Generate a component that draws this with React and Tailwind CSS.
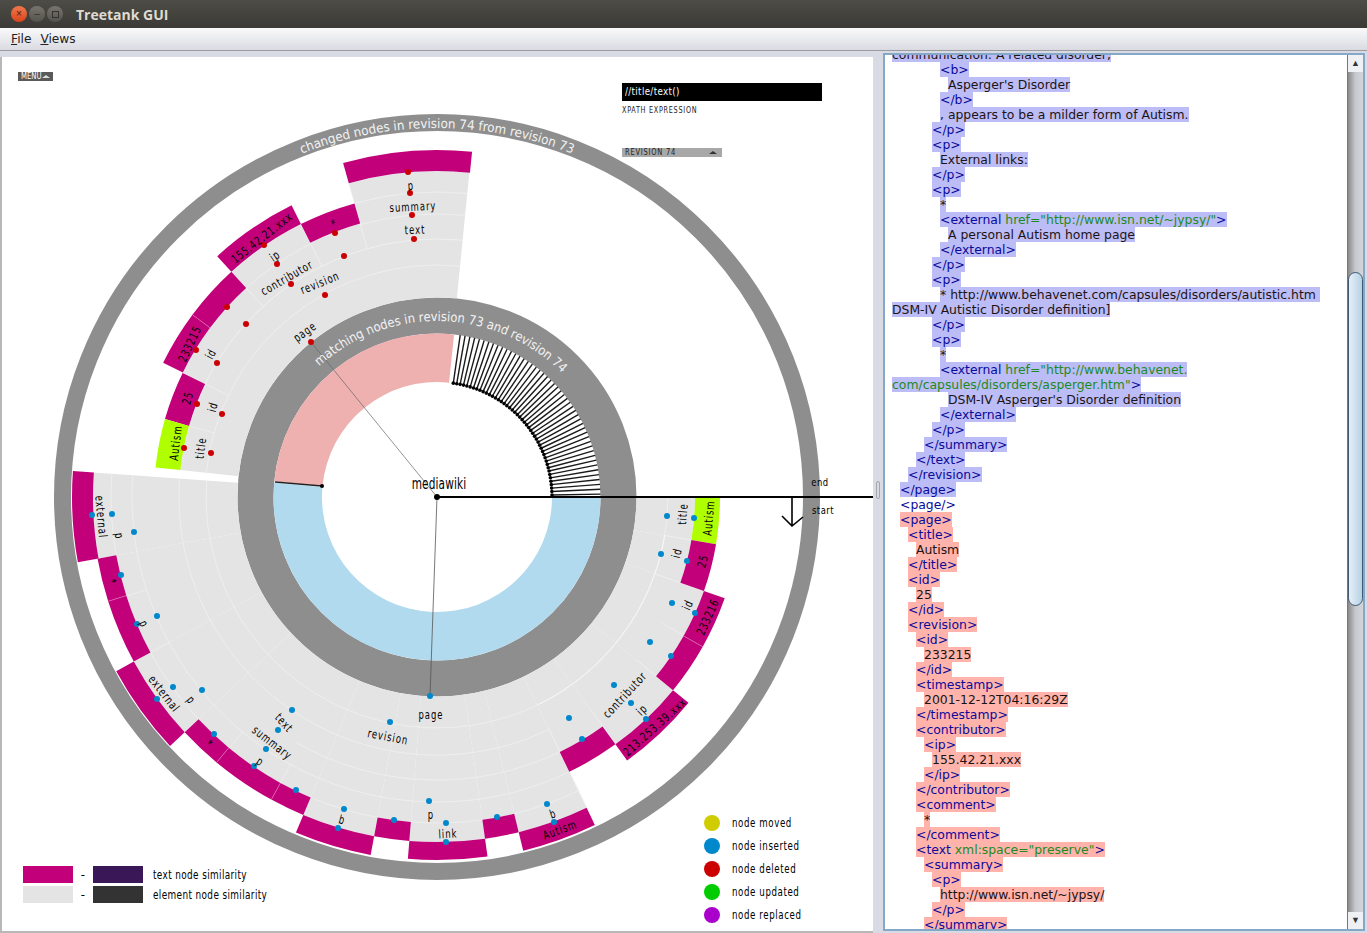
const CX = 437;
const CY = 497;
const MAGENTA = "#c2007a";
const LIME = "#b0ff00";
const GRAY = "#e4e4e4";
const RING = "#8e8e8e";
const LABEL_FONT = '"DejaVu Sans Condensed", "DejaVu Sans", sans-serif';

const pt = (r, a) => {
  const t = (a * Math.PI) / 180;
  return [CX + r * Math.cos(t), CY + r * Math.sin(t)];
};

// annular sector between radii r1..r2, angles a1..a2 in degrees clockwise from 3 o'clock
const sector = (r1, r2, a1, a2) => {
  const [x1, y1] = pt(r2, a1);
  const [x2, y2] = pt(r2, a2);
  const [x3, y3] = pt(r1, a2);
  const [x4, y4] = pt(r1, a1);
  const large = a2 - a1 > 180 ? 1 : 0;
  return `M${x1} ${y1}A${r2} ${r2} 0 ${large} 1 ${x2} ${y2}L${x3} ${y3}A${r1} ${r1} 0 ${large} 0 ${x4} ${y4}Z`;
};

const arc = (r, a1, a2) => {
  const [x1, y1] = pt(r, a1);
  const [x2, y2] = pt(r, a2);
  return `M${x1} ${y1}A${r} ${r} 0 ${a2 - a1 > 180 ? 1 : 0} 1 ${x2} ${y2}`;
};

// gray part of the lower half: [from, to, outer radius]
const lowerGray = [
  [0, 9.6, 258], [9.6, 19.4, 258], [19.4, 39.3, 283], [39.3, 54.2, 305], [54.2, 64.3, 283],
  [64.3, 76.3, 345], [76.3, 82, 326], [82, 94.6, 345], [94.6, 100.5, 326], [100.5, 112.8, 345],
  [112.8, 137, 326], [137, 151.5, 345], [151.5, 169.7, 326], [169.7, 184.1, 344],
];

const upperGray = [
  [-174, -154, 258], [-154, -132.4, 283], [-132.4, -116.5, 305], [-116.5, -105.7, 284], [-105.7, -84.3, 326],
];

// leaf segments: [inner r, outer r, from, to, colour]
const leaves = [
  [326, 347, -105.7, -84.2, MAGENTA], [284, 305, -116.5, -105.7, MAGENTA], [305, 326, -132.4, -116.5, MAGENTA],
  [283, 305, -143.3, -132.4, MAGENTA], [283, 305, -153.9, -143.3, MAGENTA], [258, 283, -164, -154, MAGENTA],
  [258, 283, -174, -164, LIME],
  [258, 283, 0, 9.6, LIME], [258, 283, 9.6, 19.4, MAGENTA], [283, 305, 19.4, 29.4, MAGENTA],
  [283, 305, 29.4, 39.3, MAGENTA], [305, 325, 39.3, 54.2, MAGENTA], [283, 305, 54.2, 64.3, MAGENTA],
  [345, 364, 64.3, 76.3, MAGENTA], [326, 345, 76.3, 82, MAGENTA], [345, 363, 82, 94.6, MAGENTA],
  [326, 345, 94.6, 100.5, MAGENTA], [345, 364, 100.5, 112.8, MAGENTA], [326, 345, 112.8, 118.7, MAGENTA],
  [326, 345, 118.7, 129.7, MAGENTA], [326, 345, 129.7, 137, MAGENTA], [345, 365, 137, 151.5, MAGENTA],
  [326, 345, 151.5, 162.4, MAGENTA], [326, 345, 162.4, 169.7, MAGENTA], [344, 365, 169.7, 184.1, MAGENTA],
];

// thin pale lines between the nodes
const rings = [
  [232, -174, -84.3], [258, -174, -84.3], [283, -105.7, -84.3], [305, -105.7, -84.3], [305, -132.4, -116.5],
  [283, -132.4, -116.5],
  [231, 0, 184], [258, 64, 184], [283, 64.3, 120], [305, 64.3, 184],
  [326, 64.3, 76.3], [326, 82, 94.6], [326, 100.5, 112.8], [326, 137, 151.5], [326, 169.7, 184.1],
];
const spokes = [
  [-164, 232, 258], [-154, 232, 283], [-143.3, 283, 305], [-132.4, 258, 305], [-116.5, 258, 305], [-105.7, 258, 326],
  [9.6, 231, 258], [19.4, 229, 283], [29.3, 258, 305], [39.2, 258, 305], [54.1, 261, 305], [64.2, 258, 345],
  [162.3, 305, 345], [151.5, 304, 345], [129.6, 305, 345], [118.7, 305, 345],
];

const redDots = [
  [408, 172], [410, 193], [412, 215], [414, 239], [335, 233], [344, 256], [264, 245], [277, 264], [291, 284], [325, 295],
  [227, 307], [246, 324], [196, 350], [217, 363], [197, 404], [222, 414], [184, 448], [211, 453], [311, 342],
];
const blueDots = [
  [92, 515], [112, 514], [134, 532], [121, 575], [137, 624], [157, 616], [173, 687], [202, 690], [157, 699], [214, 734],
  [254, 766], [266, 749], [278, 730], [292, 710], [296, 790], [344, 809], [338, 828], [394, 820], [429, 801], [446, 823],
  [446, 842], [390, 722], [430, 696], [667, 516], [694, 518], [661, 554], [687, 561], [672, 603], [695, 613], [650, 642],
  [671, 656], [614, 685], [631, 703], [646, 719], [569, 718], [582, 739], [547, 804], [554, 822], [497, 817],
];

// [text, x, y, rotation]
const labels = [
  ["p", 411, 186, -4], ["summary", 413, 207, -3], ["text", 415, 230, -2], ["*", 334, 224, -20],
  ["155.42.21.xxx", 262, 238, -38], ["ip", 275, 256, -34], ["contributor", 287, 278, -30], ["revision", 320, 283, -22],
  ["page", 305, 332, -36], ["233215", 190, 344, -65], ["id", 211, 354, -62], ["25", 188, 398, -75],
  ["id", 213, 407, -74], ["Autism", 176, 443, -83], ["title", 201, 448, -83],
  ["title", 683, 514, -85], ["Autism", 709, 518, -85], ["id", 677, 553, -76], ["25", 703, 561, -75],
  ["id", 688, 605, -66], ["233216", 708, 617, -66], ["contributor", 625, 695, -47], ["ip", 642, 710, -44],
  ["213.253.39.xxx", 655, 727, -42], ["page", 431, 715, 0], ["revision", 388, 737, 11], ["text", 284, 723, 48],
  ["summary", 272, 743, 38], ["p", 260, 762, 35], ["external", 164, 694, 52], ["p", 191, 700, 52],
  ["p", 144, 624, 65], ["*", 112, 582, 72], ["external", 101, 517, 85], ["p", 119, 536, 82], ["*", 209, 744, 45],
  ["b", 342, 820, 15], ["p", 431, 815, 0], ["link", 448, 834, -3], ["b", 553, 814, -18], ["Autism", 560, 830, -20],
];

const stripes = [];
for (let a = -1; a >= -83.5; a -= 1.72) stripes.push(a);

function Chart() {
  return (
    <svg width="871" height="874" viewBox="2 57 871 874" className="block">
      <defs>
        <path id="outerCurve" d={arc(369, -150, -30)} />
        <path id="innerCurve" d={arc(176, -170, -10)} />
      </defs>

      {/* outer and inner grey rings */}
      <circle cx={CX} cy={CY} r={374.5} fill="none" stroke={RING} strokeWidth={17} />
      <circle cx={CX} cy={CY} r={181.5} fill="none" stroke={RING} strokeWidth={36} />

      {/* grey sectors */}
      <path d={sector(199.5, 258, -174, -84.3)} fill={GRAY} />
      {upperGray.map(([a1, a2, r]) => (
        <path key={a1} d={sector(258, r, a1, a2)} fill={GRAY} />
      ))}
      {lowerGray.map(([a1, a2, r]) => (
        <path key={a1} d={sector(199.5, r, a1, a2)} fill={GRAY} />
      ))}
      {rings.map(([r, a1, a2], i) => (
        <path key={i} d={arc(r, a1, a2)} fill="none" stroke="#f2f2f2" strokeWidth={0.7} />
      ))}
      {spokes.map(([a, r1, r2], i) => {
        const [x1, y1] = pt(r1, a);
        const [x2, y2] = pt(r2, a);
        return <line key={i} x1={x1} y1={y1} x2={x2} y2={y2} stroke="#f0f0f0" strokeWidth={0.7} />;
      })}
      <path d={arc(231, 9.6, 64)} fill="none" stroke="#f8f8f8" strokeWidth={1} />

      {leaves.map(([r1, r2, a1, a2, color], i) => (
        <path key={i} d={sector(r1, r2, a1, a2)} fill={color} />
      ))}
      {[[-143.3, 283, 305], [162.4, 326, 345], [129.7, 326, 345], [118.7, 326, 345], [29.4, 283, 305]].map(([a, r1, r2], i) => {
        const [x1, y1] = pt(r1, a);
        const [x2, y2] = pt(r2, a);
        return <line key={i} x1={x1} y1={y1} x2={x2} y2={y2} stroke="#d96aae" strokeWidth={0.8} />;
      })}

      {/* middle ring: matches in pink and blue, changes as black stripes */}
      <path d={sector(115, 163.5, -174.5, -84)} fill="#efb0b0" />
      <path d={sector(115, 163.5, 0, 185)} fill="#b2daef" />
      {stripes.map((a) => {
        const [x1, y1] = pt(115, a);
        const [x2, y2] = pt(163.5, a);
        return (
          <g key={a}>
            <line x1={x1} y1={y1} x2={x2} y2={y2} stroke="#1a1a1a" strokeWidth={1.4} />
            <circle cx={x1} cy={y1} r={1.8} fill="#000" />
          </g>
        );
      })}
      <line x1={275} y1={482} x2={322} y2={486} stroke="#222" strokeWidth={1.6} />
      <circle cx={322} cy={486} r={2} fill="#000" />

      {/* hierarchy links */}
      <line x1={CX} y1={CY} x2={311} y2={342} stroke="#666" strokeWidth={0.7} />
      <line x1={CX} y1={CY} x2={430} y2={696} stroke="#555" strokeWidth={0.8} />
      <line x1={CX} y1={CY} x2={873} y2={CY} stroke="#000" strokeWidth={2} />
      <circle cx={CX} cy={CY} r={3} fill="#000" />

      {/* revision arrow */}
      <path d="M792 497V526M782 516L792 526L803 517" fill="none" stroke="#000" strokeWidth={1.6} />

      {redDots.map(([x, y]) => (
        <circle key={`${x}-${y}`} cx={x} cy={y} r={3} fill="#cc0000" />
      ))}
      {blueDots.map(([x, y]) => (
        <circle key={`${x}-${y}`} cx={x} cy={y} r={3} fill="#0088cc" />
      ))}

      {/* the labels are a narrow font in the picture, so squeeze them horizontally */}
      <g fontFamily={LABEL_FONT} fontSize={12} letterSpacing={1.3} fill="#000" textAnchor="middle" dominantBaseline="central">
        {labels.map(([t, x, y, rot], i) => (
          <text key={i} transform={`translate(${x} ${y}) rotate(${rot}) scale(0.78 1)`}>
            {t}
          </text>
        ))}
        <text transform="translate(439 484) scale(0.78 1)" fontSize={15} letterSpacing={0.2}>mediawiki</text>
        <text transform="translate(820 482) scale(0.85 1)" fontSize={11} letterSpacing={0.6}>end</text>
        <text transform="translate(823 510) scale(0.85 1)" fontSize={11} letterSpacing={0.6}>start</text>
      </g>

      <g fontFamily={LABEL_FONT} fontSize={13} fill="#f2f2f2" textAnchor="middle">
        <text>
          <textPath href="#outerCurve" startOffset="50%" textLength={277} lengthAdjust="spacingAndGlyphs">changed nodes in revision 74 from revision 73</textPath>
        </text>
        <text>
          <textPath href="#innerCurve" startOffset="51%" textLength={268} lengthAdjust="spacingAndGlyphs">matching nodes in revision 73 and revision 74</textPath>
        </text>
      </g>
    </svg>
  );
}

const nodeKinds = [
  ["node moved", "bg-[#cfcc00]"],
  ["node inserted", "bg-[#0088cc]"],
  ["node deleted", "bg-[#cc0000]"],
  ["node updated", "bg-[#00cc00]"],
  ["node replaced", "bg-[#aa00cc]"],
];

const labelFont = "font-['DejaVu_Sans_Condensed','DejaVu_Sans',sans-serif]";

function CanvasPane() {
  return (
    <div className="relative w-[873px] border-l-2 border-b-2 border-[#b8b8b8] bg-white overflow-hidden">
      <Chart />

      <div className={`absolute left-[16px] top-[15px] flex h-[9px] w-[35px] items-center bg-[#5a5a5a] pl-[3px] text-[9px] leading-none text-white ${labelFont}`}>
        <span className="w-[21px] origin-left scale-x-[0.85]">MENU</span>
        <span className="h-0 w-0 border-x-[4px] border-b-[3px] border-x-transparent border-b-[#dddddd]" />
      </div>

      <div className={`absolute left-[620px] top-[26px] w-[200px] ${labelFont}`}>
        <div className="flex h-[18px] items-center bg-black pl-[3px] text-[11px] tracking-[0.4px] text-white">
          <span className="origin-left scale-x-[0.88]">//title/text()</span>
        </div>
        <div className="mt-[2px] h-[14px] origin-left scale-x-[0.8] text-[9px] leading-[14px] tracking-[0.9px] text-[#222]">XPATH EXPRESSION</div>
        <div className="mt-[31px] flex h-[9px] w-[100px] items-center justify-between bg-[#a8a8a8] pl-[3px] pr-[5px] text-[9px] leading-none tracking-[0.9px] text-[#222]">
          <span className="origin-left scale-x-[0.83]">REVISION 74</span>
          <span className="h-0 w-0 border-x-[4px] border-b-[3px] border-x-transparent border-b-[#333333]" />
        </div>
      </div>

      <div className={`absolute left-[21px] top-[809px] flex flex-col gap-[3px] text-[13px] tracking-[0.5px] text-black ${labelFont}`}>
        <div className="flex h-[17px] items-center">
          <span className="h-[17px] w-[50px] bg-[#c2007a]" />
          <span className="w-[20px] text-center">-</span>
          <span className="h-[17px] w-[50px] bg-[#3a1858]" />
          <span className="ml-[10px] origin-left scale-x-[0.76] whitespace-nowrap">text node similarity</span>
        </div>
        <div className="flex h-[17px] items-center">
          <span className="h-[17px] w-[50px] bg-[#e4e4e4]" />
          <span className="w-[20px] text-center">-</span>
          <span className="h-[17px] w-[50px] bg-[#333333]" />
          <span className="ml-[10px] origin-left scale-x-[0.76] whitespace-nowrap">element node similarity</span>
        </div>
      </div>

      <div className={`absolute left-[702px] top-[758px] flex flex-col gap-[7px] text-[13px] tracking-[0.8px] text-black ${labelFont}`}>
        {nodeKinds.map(([label, color]) => (
          <div key={label} className="flex h-[16px] items-center gap-[12px]">
            <span className={`h-[16px] w-[16px] rounded-full ${color}`} />
            <span className="origin-left scale-x-[0.74] whitespace-nowrap">{label}</span>
          </div>
        ))}
      </div>
    </div>
  );
}

const A = (s) => ({ attr: s });

// [indent, highlight, content]; content is a string or a list of tag/attribute pieces
const rows = [
  [0, "b", "communication: A related disorder,"],
  [48, "b", "<b>"],
  [56, "b", "Asperger's Disorder"],
  [48, "b", "</b>"],
  [48, "b", ", appears to be a milder form of Autism."],
  [40, "b", "</p>"],
  [40, "b", "<p>"],
  [48, "b", "External links:"],
  [40, "b", "</p>"],
  [40, "b", "<p>"],
  [48, "b", "*"],
  [48, "b", ["<external ", A('href="http://www.isn.net/~jypsy/"'), ">"]],
  [56, "b", "A personal Autism home page"],
  [48, "b", "</external>"],
  [40, "b", "</p>"],
  [40, "b", "<p>"],
  [48, "b", "* http://www.behavenet.com/capsules/disorders/autistic.htm "],
  [0, "b", "DSM-IV Autistic Disorder definition]"],
  [40, "b", "</p>"],
  [40, "b", "<p>"],
  [48, "b", "*"],
  [48, "b", ["<external ", A('href="http://www.behavenet.')]],
  [0, "b", [A('com/capsules/disorders/asperger.htm"'), ">"]],
  [56, "b", "DSM-IV Asperger's Disorder definition"],
  [48, "b", "</external>"],
  [40, "b", "</p>"],
  [32, "b", "</summary>"],
  [24, "b", "</text>"],
  [16, "b", "</revision>"],
  [8, "b", "</page>"],
  [8, "", "<page/>"],
  [8, "r", "<page>"],
  [16, "r", "<title>"],
  [24, "r", "Autism"],
  [16, "r", "</title>"],
  [16, "r", "<id>"],
  [24, "r", "25"],
  [16, "r", "</id>"],
  [16, "r", "<revision>"],
  [24, "r", "<id>"],
  [32, "r", "233215"],
  [24, "r", "</id>"],
  [24, "r", "<timestamp>"],
  [32, "r", "2001-12-12T04:16:29Z"],
  [24, "r", "</timestamp>"],
  [24, "r", "<contributor>"],
  [32, "r", "<ip>"],
  [40, "r", "155.42.21.xxx"],
  [32, "r", "</ip>"],
  [24, "r", "</contributor>"],
  [24, "r", "<comment>"],
  [32, "r", "*"],
  [24, "r", "</comment>"],
  [24, "r", ["<text ", A('xml:space="preserve"'), ">"]],
  [32, "r", "<summary>"],
  [40, "r", "<p>"],
  [48, "r", "http://www.isn.net/~jypsy/"],
  [40, "r", "</p>"],
  [32, "r", "</summary>"],
];

const highlight = { b: "bg-[#bcbcf6]", r: "bg-[#ffb3ab]", "": "" };

function Piece({ part }) {
  if (part.attr) return <span className="text-[#1d8a1d]">{part.attr}</span>;
  if (part.startsWith("<") || part === ">") return <span className="text-[#0a0a9a]">{part}</span>;
  return <span className="text-[#1c1414]">{part}</span>;
}

function SourcePane() {
  return (
    <div className="-mt-[4px] mb-[2px] flex flex-1 min-w-0 border-2 border-[#86a8c8] bg-white">
      <div className="flex-1 overflow-hidden pl-[7px] font-['DejaVu_Sans',sans-serif] text-[12.4px] leading-[15px] whitespace-pre">
        <div className="-mt-[8px]">
          {rows.map(([indent, hl, content], i) => (
            <div key={i} className="h-[15px]" style={{ paddingLeft: indent }}>
              <span className={`inline-block h-[15px] ${highlight[hl]}`}>
                {(Array.isArray(content) ? content : [content]).map((part, j) => (
                  <Piece key={j} part={part} />
                ))}
              </span>
            </div>
          ))}
        </div>
      </div>
      <div className="flex w-[16px] flex-col bg-gradient-to-r from-[#8a8a8a] via-[#c8c9ce] to-[#d4d5da] border-l border-[#777]">
        <div className="flex h-[17px] items-center justify-center bg-[#eef0f3] text-[9px] leading-none text-[#333]">▲</div>
        <div className="mt-[200px] h-[334px] rounded-b-[10px] rounded-t-[10px] border border-[#3f5a72] bg-gradient-to-r from-[#e8eff5] to-[#b5d2e8]" />
        <div className="flex-1" />
        <div className="flex h-[17px] items-center justify-center bg-[#eef0f3] text-[9px] leading-none text-[#333]">▼</div>
      </div>
    </div>
  );
}

export default function App() {
  return (
    <div className="flex h-[933px] w-[1367px] flex-col overflow-hidden bg-[#d8dbe3] font-['Liberation_Sans',sans-serif]">
      {/* title bar */}
      <div className="flex h-[28px] items-center bg-gradient-to-b from-[#4e4c46] to-[#3b3a36] pl-[11px]">
        <div className="flex h-[16px] w-[16px] items-center justify-center rounded-full bg-gradient-to-b from-[#f2774a] to-[#d8431a] text-[10px] leading-none text-[#4a2010]">×</div>
        <div className="ml-[2px] flex h-[16px] w-[16px] items-center justify-center rounded-full bg-gradient-to-b from-[#77756e] to-[#55534d] text-[10px] leading-none text-[#33322e]">–</div>
        <div className="ml-[2px] flex h-[16px] w-[16px] items-center justify-center rounded-full bg-gradient-to-b from-[#77756e] to-[#55534d]">
          <span className="h-[7px] w-[7px] border border-[#33322e]" />
        </div>
        <span className="ml-[13px] font-['Open_Sans',sans-serif] text-[14px] font-bold text-[#dfdbd2]">Treetank GUI</span>
      </div>

      {/* menu bar */}
      <div className="flex h-[23px] items-center gap-[9px] border-b border-[#9a9ca2] bg-gradient-to-b from-[#fafafb] to-[#d9dbe1] pl-[11px] font-['DejaVu_Sans',sans-serif] text-[12.2px] text-[#222]">
        <span><span className="underline">F</span>ile</span>
        <span><span className="underline">V</span>iews</span>
      </div>

      <div className="flex min-h-0 flex-1 pt-[6px]">
        <CanvasPane />
        <div className="relative w-[10px] shrink-0">
          <div className="absolute left-[3px] top-[424px] h-[18px] w-[4px] rounded-[2px] border border-[#a4a6ac]" />
        </div>
        <SourcePane />
        <div className="w-[2px] shrink-0" />
      </div>
    </div>
  );
}
